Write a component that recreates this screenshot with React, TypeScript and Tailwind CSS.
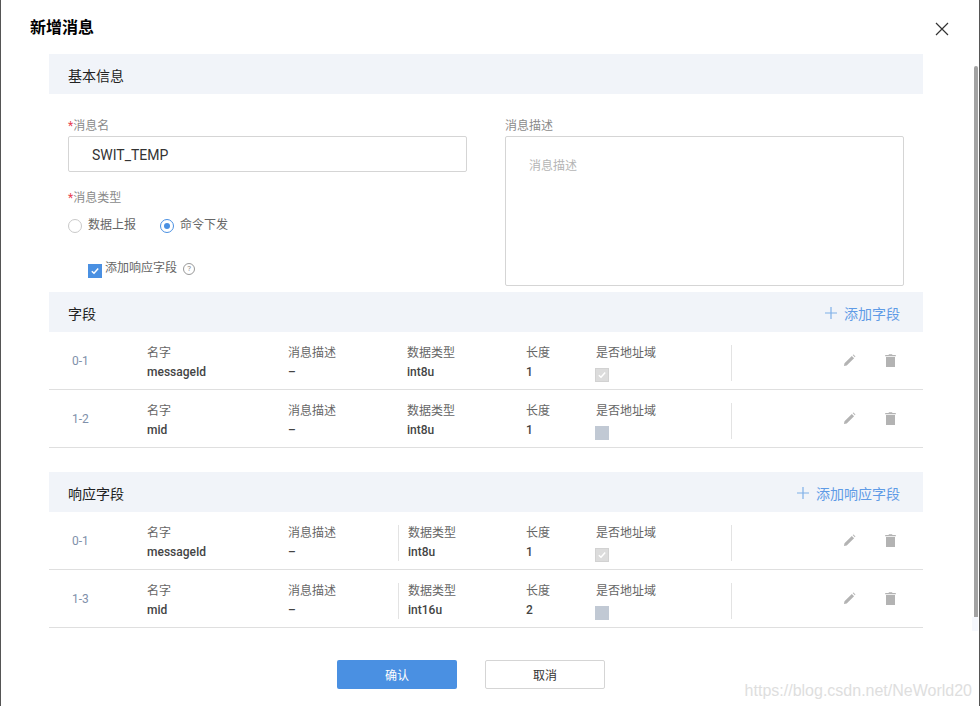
const cn = "font-['Roboto','Noto_Sans_CJK_SC',sans-serif]";

function Pencil() {
  return (
    <svg width="13" height="13" viewBox="0 0 14 14" className="block">
      <path d="M1 13 L1.6 10 L9.5 2.1 L11.9 4.5 L4 12.4 Z M10.4 1.2 L11.3 0.6 L13.4 2.7 L12.8 3.6 Z" fill="#b3b3b3" />
    </svg>
  );
}

function Trash() {
  return (
    <svg width="11" height="13" viewBox="0 0 11 13" className="block">
      <path d="M1 3 H10 V13 H1 Z M0.2 1.1 H3.5 L4 0.2 H7 L7.5 1.1 H10.8 V2.2 H0.2 Z" fill="#b3b3b3" />
    </svg>
  );
}

function Tick({ color, w = 8 }: { color: string; w?: number }) {
  return (
    <svg width={w} height={w} viewBox="0 0 8 8" className="block">
      <path d="M0.8 4.2 L3 6.2 L7.2 1.6" fill="none" stroke={color} strokeWidth="1.5" />
    </svg>
  );
}

function Cell({ w, label, value, line }: { w: string; label: string; value: string; line?: boolean }) {
  return (
    <div className={`${w} h-9 ${line ? "border-l border-[#e3e3e3] pl-[9px]" : ""}`}>
      <div className="h-[19px] text-[12px] leading-[17px] text-[#666666]">{label}</div>
      <div className="h-[17px] text-[12px] leading-[17px] font-medium text-[#444444]">{value}</div>
    </div>
  );
}

type Row = { id: string; name: string; type: string; len: string; checked: boolean };

function FieldRow({ r, line }: { r: Row; line?: boolean }) {
  return (
    <div className="flex h-[58px] items-start border-b border-[#dfdfdf] pt-[13px]">
      <div className="-mt-[2px] flex h-9 w-[98px] items-center pl-[23px] text-[12px] text-[#7f90aa]">{r.id}</div>
      <Cell w="w-[141px]" label="名字" value={r.name} />
      <Cell w={line ? "w-[110px]" : "w-[119px]"} label="消息描述" value="–" />
      <Cell w={line ? "w-[128px]" : "w-[119px]"} label="数据类型" value={r.type} line={line} />
      <Cell w="w-[69px]" label="长度" value={r.len} />
      <div className="h-9 w-[137px] border-r border-[#e3e3e3]">
        <div className="h-[19px] pl-px text-[12px] leading-[17px] text-[#666666]">是否地址域</div>
        {r.checked ? (
          <div className="mt-[4px] flex h-[14px] w-[14px] items-center justify-center border border-[#d2d2d2] bg-[#dcdcdc]">
            <Tick color="#ffffff" />
          </div>
        ) : (
          <div className="mt-[4px] h-[14px] w-[14px] bg-[#c1c9d4]" />
        )}
      </div>
      <div className="-mt-[3px] ml-[111px] flex h-9 w-[14px] items-center"><Pencil /></div>
      <div className="-mt-[3px] ml-[28px] flex h-9 w-[12px] items-center"><Trash /></div>
    </div>
  );
}

function Band({ title, action, className = "" }: { title: string; action?: string; className?: string }) {
  return (
    <div className={`flex h-10 items-center justify-between bg-[#f1f4f9] pl-[19px] pr-[23px] pt-[4px] text-[14px] text-[#222222] ${className}`}>
      <span>{title}</span>
      {action && (
        <span className="flex items-center text-[14px] text-[#5f9be6]">
          <svg width="12" height="12" viewBox="0 0 12 12" className="-mt-[2px] mr-[7px] block">
            <path d="M6 0 V12 M0 6 H12" stroke="#7fb0e8" strokeWidth="1.2" fill="none" />
          </svg>
          {action}
        </span>
      )}
    </div>
  );
}

const fields: Row[] = [
  { id: "0-1", name: "messageId", type: "int8u", len: "1", checked: true },
  { id: "1-2", name: "mid", type: "int8u", len: "1", checked: false },
];
const resp: Row[] = [
  { id: "0-1", name: "messageId", type: "int8u", len: "1", checked: true },
  { id: "1-3", name: "mid", type: "int16u", len: "2", checked: false },
];

export default function App() {
  return (
    <div className={`relative h-[706px] w-[980px] overflow-hidden border-x border-[#555555] bg-white ${cn}`}>
      <div className="flex h-[54px] items-start justify-between">
        <h1 className="ml-[29px] mt-[17px] text-[16px] font-bold leading-[22px] text-black">新增消息</h1>
        <svg width="14" height="14" viewBox="0 0 14 14" className="mr-[30px] mt-[22px] block">
          <path d="M1 1 L13 13 M13 1 L1 13" stroke="#333333" strokeWidth="1.2" fill="none" />
        </svg>
      </div>

      <div className="ml-[48px] w-[874px]">
        <Band title="基本信息" />
        <div className="flex h-[198px]">
          <div className="ml-[19px] w-[399px]">
            <div className="mt-[23px] h-[19px] text-[12px] leading-[19px] text-[#8a8a8a]"><span className="text-[#e8414f]">*</span>消息名</div>
            <div className="flex h-9 items-center rounded-[2px] border border-[#d5d5d5] pl-[23px] pt-[2px] text-[14px] text-[#333333]">SWIT_TEMP</div>
            <div className="mt-[17px] h-[19px] text-[12px] leading-[19px] text-[#8a8a8a]"><span className="text-[#e8414f]">*</span>消息类型</div>
            <div className="mt-[10px] flex h-[16px] items-center text-[12px] text-[#666666]">
              <span className="h-[14px] w-[14px] rounded-full border border-[#c9c9c9]" />
              <span className="ml-[6px] -mt-[2px]">数据上报</span>
              <span className="ml-[24px] flex h-[14px] w-[14px] items-center justify-center rounded-full border border-[#4a90e2]">
                <span className="h-[6px] w-[6px] rounded-full bg-[#4a90e2]" />
              </span>
              <span className="ml-[6px] -mt-[2px]">命令下发</span>
            </div>
            <div className="ml-5 mt-[25px] flex h-[20px] items-center text-[12px] text-[#666666]">
              <span className="mt-[4px] flex h-[14px] w-[14px] items-center justify-center bg-[#4a90e2]"><Tick color="#ffffff" /></span>
              <span className="ml-[3px] -mt-[3px]">添加响应字段</span>
              <span className="ml-[6px] flex h-[12px] w-[12px] items-center justify-center rounded-full border border-[#999999] text-[8px] leading-none text-[#888888]">?</span>
            </div>
          </div>
          <div className="ml-[38px] w-[399px]">
            <div className="mt-[23px] h-[19px] text-[12px] leading-[19px] text-[#8a8a8a]">消息描述</div>
            <div className="h-[150px] rounded-[2px] border border-[#d5d5d5] pl-[23px] pt-[20px] text-[12px] leading-[19px] text-[#b5b5b5]">消息描述</div>
          </div>
        </div>

        <Band title="字段" action="添加字段" />
        {fields.map((r) => <FieldRow key={r.id} r={r} />)}

        <Band title="响应字段" action="添加响应字段" className="mt-6" />
        {resp.map((r) => <FieldRow key={r.id} r={r} line />)}

        <div className="mt-8 flex justify-center gap-7 pr-[30px]">
          <button className="h-[29px] w-[120px] rounded-[2px] bg-[#4a90e2] pt-[3px] text-[12px] text-white">确认</button>
          <button className="h-[29px] w-[120px] rounded-[2px] border border-[#d5d5d5] bg-white pt-[3px] text-[12px] text-[#333333]">取消</button>
        </div>
      </div>

      <div className="absolute right-[1px] top-[66px] h-[551px] w-[4px] rounded-t-[2px] bg-[#a3a3a3]" />
      <div className="absolute right-[1px] top-[617px] h-[14px] w-[6px] bg-[#f6f8fd]" />
      <div className="absolute bottom-[5px] right-[7px] font-['Liberation_Sans',sans-serif] text-[16px] leading-[20px] text-[#dedede]">https://blog.csdn.net/NeWorld20</div>
    </div>
  );
}
